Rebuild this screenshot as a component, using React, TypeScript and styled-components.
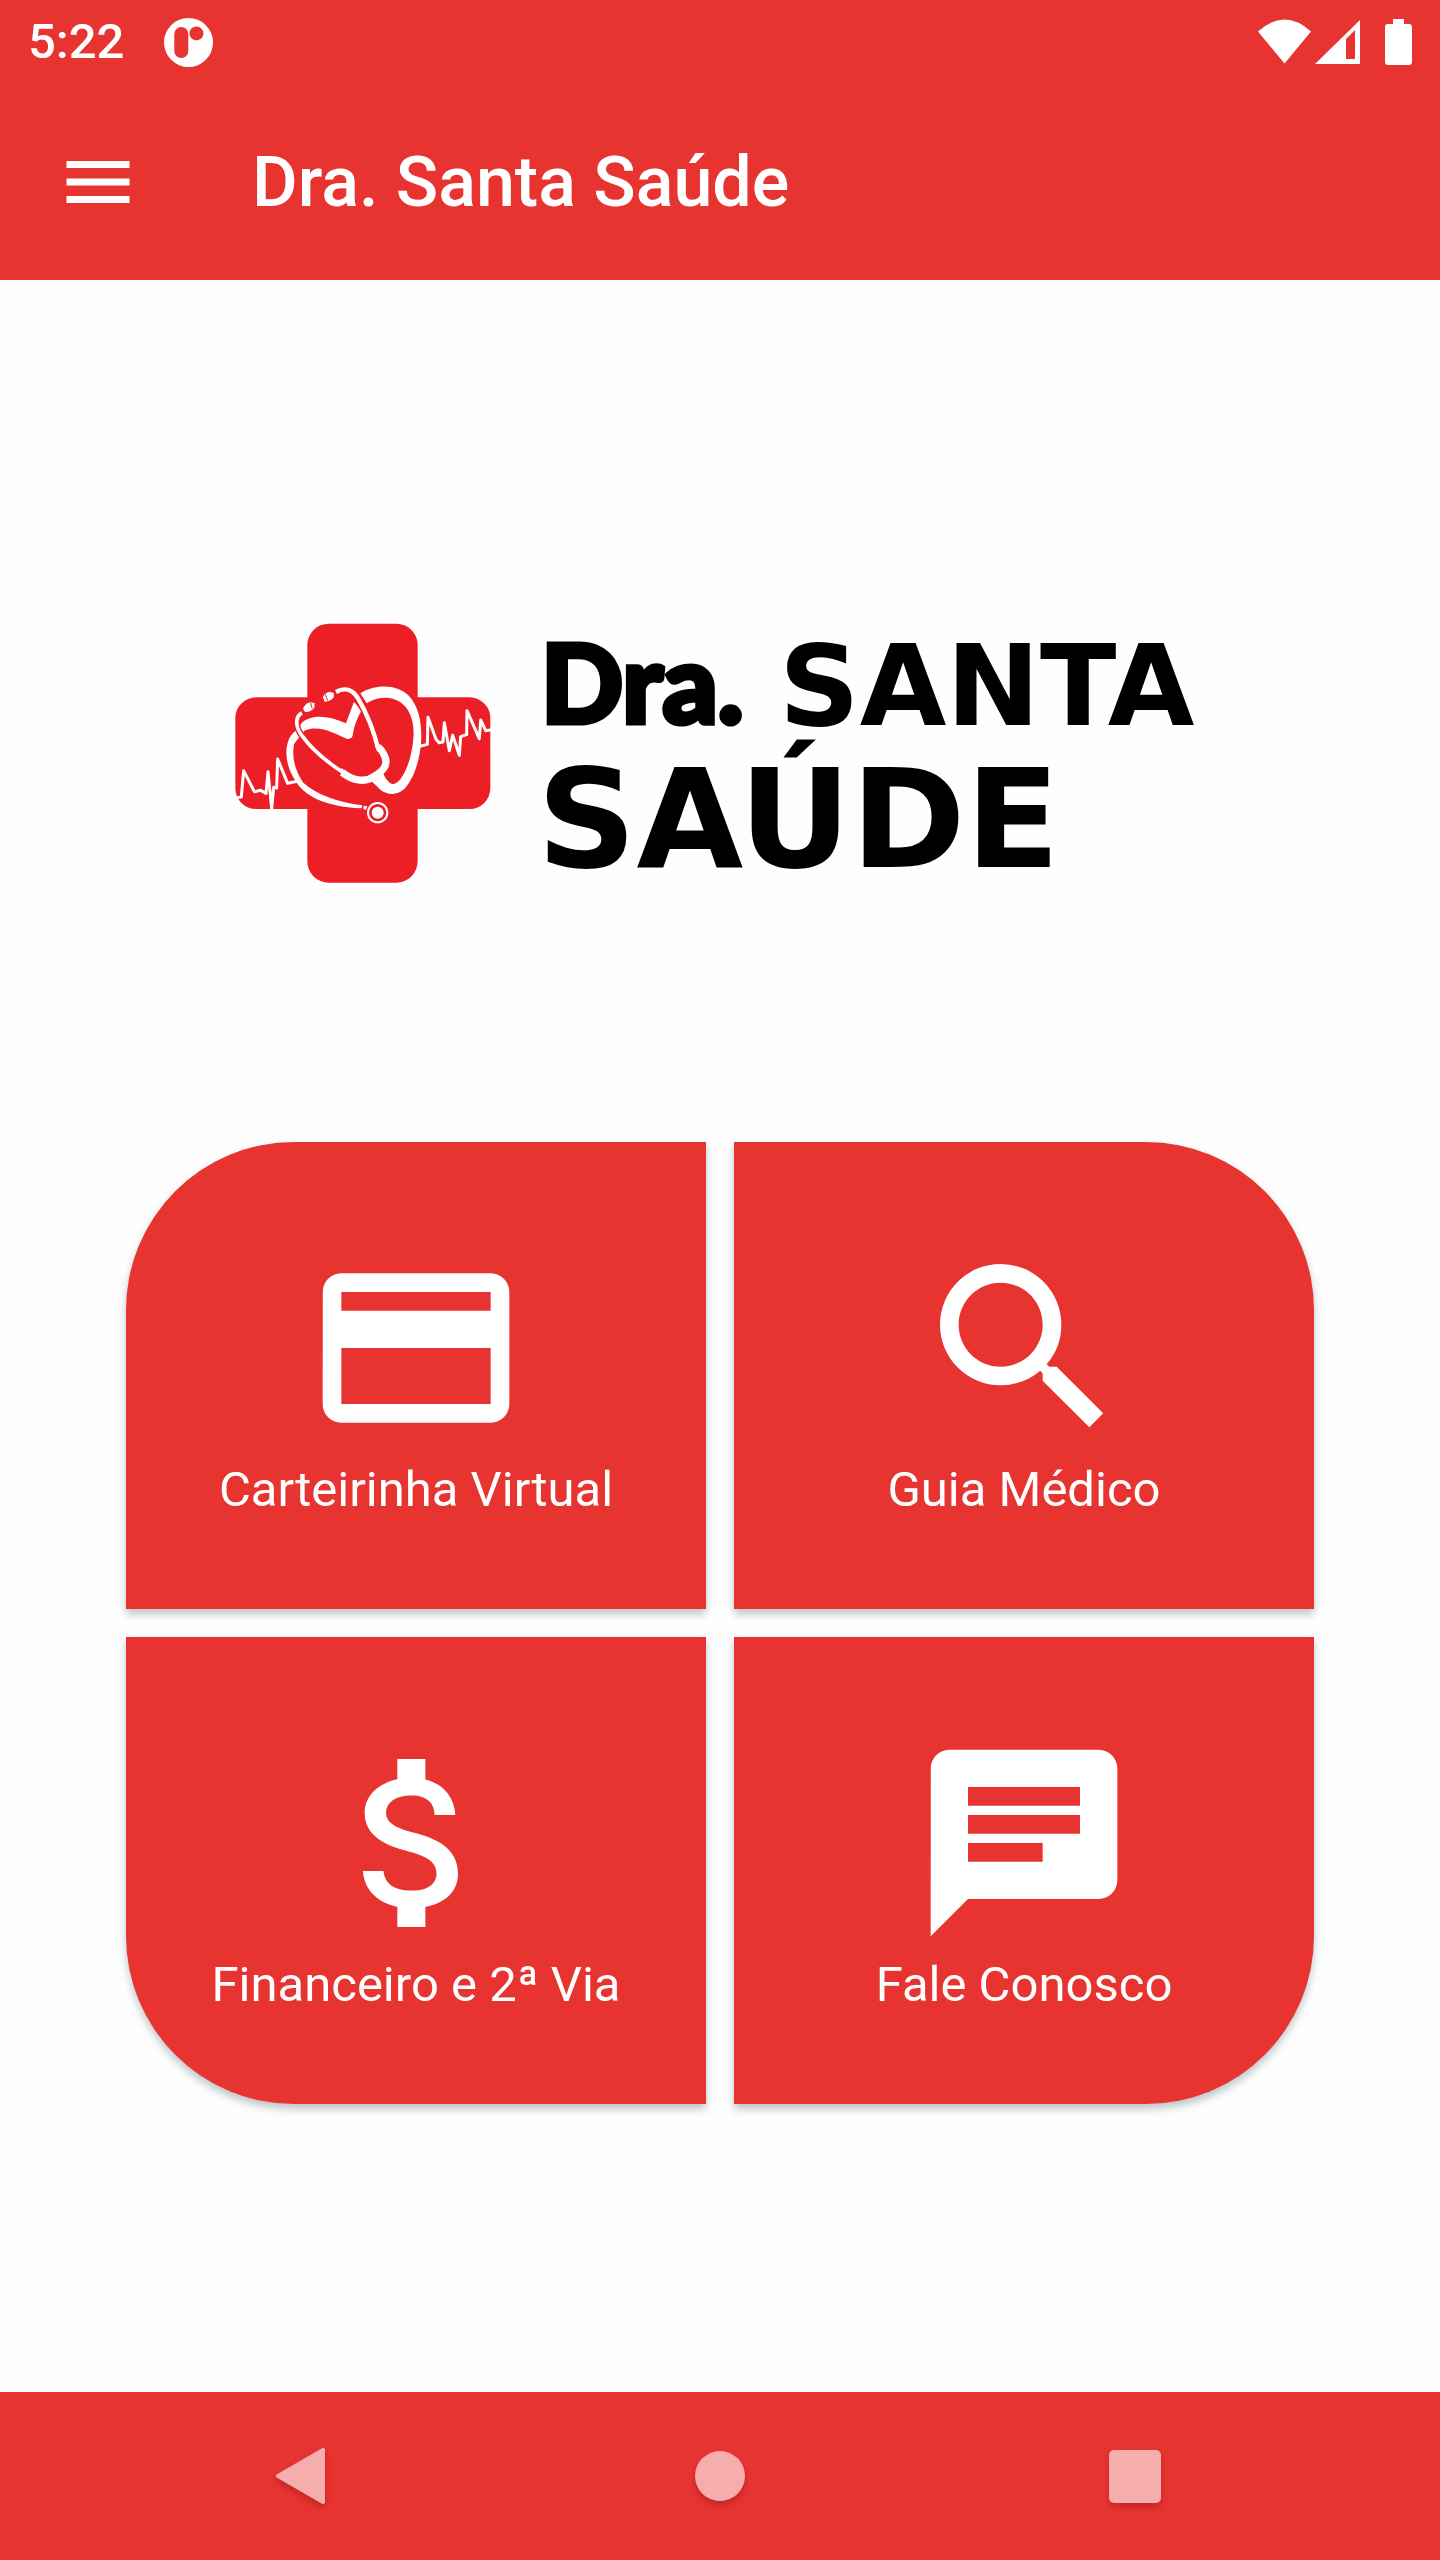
import React from "react";
import styled, { createGlobalStyle } from "styled-components";
import { MdAttachMoney, MdChat, MdMenu, MdPayment, MdSearch } from "react-icons/md";

const RED = "#e73431";
const LOGO_RED = "#ed1f26";

const GlobalStyle = createGlobalStyle`
  *, *::before, *::after { box-sizing: border-box; }
  body { margin: 0; background: #fefefe; font-family: Roboto, sans-serif; }
`;

const Screen = styled.div`
  display: flex;
  flex-direction: column;
  min-height: 100vh;
`;

const StatusBar = styled.div`
  display: flex;
  align-items: center;
  justify-content: space-between;
  height: 84px;
  padding: 0 28px;
  background: ${RED};
  color: #fff;
`;

const StatusGroup = styled.div<{ $gap: number }>`
  display: flex;
  align-items: center;
  gap: ${(p) => p.$gap}px;
`;

const Clock = styled.span`
  font-size: 49px;
  font-weight: 500;
  line-height: 60px;
`;

const AppBar = styled.header`
  display: flex;
  align-items: center;
  gap: 112px;
  height: 196px;
  padding: 0 56px;
  background: ${RED};
  color: #fff;
`;

const MenuButton = styled.button`
  display: flex;
  padding: 0;
  border: 0;
  background: none;
  color: inherit;
`;

const Title = styled.h1`
  margin: 0;
  font-size: 70px;
  font-weight: 500;
  line-height: 84px;
`;

const Main = styled.main`
  display: flex;
  flex: 1;
  flex-direction: column;
  align-items: center;
  gap: 242px;
  padding: 330px 126px 0;
`;

const Logo = styled.svg`
  width: 980px;
  max-width: 100%;
  flex-shrink: 0;
  overflow: visible;
`;

const Wordmark = styled.text<{ $size: number; $family: string; $outline?: number }>`
  font-family: ${(p) => p.$family}, sans-serif;
  font-size: ${(p) => p.$size}px;
  font-weight: 900;
  stroke: #000;
  stroke-width: ${(p) => p.$outline ?? 0}px;
`;

const Tiles = styled.nav`
  display: grid;
  grid-template-columns: 1fr 1fr;
  gap: 28px;
  width: 100%;
`;

const Tile = styled.button<{ $radius: string }>`
  display: flex;
  flex-direction: column;
  align-items: center;
  justify-content: center;
  gap: 2px;
  height: 467px;
  padding: 2px 0 0;
  border: 0;
  border-radius: ${(p) => p.$radius};
  background: ${RED};
  box-shadow: 0 5px 8px rgba(40, 60, 70, 0.3);
  color: #fff;
  font-family: inherit;
  font-size: 49px;
  line-height: 56px;
`;

const NavBar = styled.footer`
  display: flex;
  align-items: center;
  justify-content: center;
  gap: 247px;
  height: 168px;
  background: ${RED};
`;

const NavButton = styled.button`
  display: flex;
  padding: 0;
  border: 0;
  background: none;
  color: #f6adad;
  filter: drop-shadow(0 4px 3px rgba(120, 0, 0, 0.3));
`;

const tiles = [
  { label: "Carteirinha Virtual", Icon: MdPayment, radius: "168px 0 0 0" },
  { label: "Guia Médico", Icon: MdSearch, radius: "0 168px 0 0" },
  { label: "Financeiro e 2ª Via", Icon: MdAttachMoney, radius: "0 0 0 168px" },
  { label: "Fale Conosco", Icon: MdChat, radius: "0 0 168px 0" },
];

const navItems = [
  {
    label: "Voltar",
    shape: <path d="M57 84 L102 58 V110 Z" stroke="currentColor" strokeWidth="4" strokeLinejoin="round" />,
  },
  { label: "Início", shape: <circle cx="84" cy="84" r="25" /> },
  { label: "Recentes", shape: <rect x="58" y="58" width="52" height="53" rx="5" /> },
];

const TUBE_LEFT = "M246 309 C224 320 226 352 246 377 C272 414 320 455 367 486";
const TUBE_RIGHT = "M348 246 C376 230 400 240 416 268 C440 310 463 370 474 414";

function CrossEmblem() {
  return (
    <g transform="translate(-10 0) scale(0.33333)">
      <rect x="262" y="41" width="331" height="777" rx="64" fill={LOGO_RED} />
      <rect x="46" y="262" width="765" height="335" rx="62" fill={LOGO_RED} />
      <g fill="none" stroke="#fff" strokeWidth="9" strokeLinejoin="round" strokeLinecap="round">
        <path d="M48 563 L64 561 L71 482 L103 545 L122 541 L138 550 L144 485 L155 595 L161 532 L170 534 L173 447 L203 520 L235 513" />
        <path d="M602 408 L622 403 L624 322 L648 388 L657 398 L669 396 L673 338 L688 422 L698 376 L718 436 L722 380 L740 374 L741 302 L778 386 L782 330 L797 362 L811 360" />
      </g>
      <g fill="#fff">
        <path d="M421 250 C465 222 530 222 565 256 C598 290 607 345 603 400 C598 460 577 513 552 538 C530 558 500 554 482 540 L455 514 L488 484 C492 500 505 520 518 523 C542 520 560 480 571 440 C585 385 584 340 568 308 C546 262 490 250 440 280 Z" />
        <path d="M243 341 C270 314 318 314 378 340 L402 275 L424 303 C408 330 401 355 398 378 Q392 390 380 386 C345 372 300 343 253 362 L222 402 C214 450 230 490 250 518 C286 552 350 576 427 586 L425 595 C310 590 250 555 225 510 C200 472 192 425 206 390 C212 374 224 364 236 358 Z" />
      </g>
      <g fill="none" strokeLinecap="butt">
        <path d={TUBE_LEFT} stroke={LOGO_RED} strokeWidth="19" />
        <path d={TUBE_RIGHT} stroke={LOGO_RED} strokeWidth="22" />
        <path d={TUBE_LEFT} stroke="#fff" strokeWidth="11" />
        <path d={TUBE_RIGHT} stroke="#fff" strokeWidth="13" />
        <path d="M366 487 C395 510 435 520 461 500 C496 480 505 460 493 436 Q486 420 475 411" stroke="#fff" strokeWidth="22" />
        <path d="M362 478 L372 487 M467 413 L481 407" stroke="#fff" strokeWidth="10" />
      </g>
      <g fill="#fff">
        <path d="M249 296 Q254 282 270 277 L284 279 L283 294 Q270 308 255 306 Z" />
        <path d="M309 262 Q312 250 328 245 L342 249 L341 262 Q330 276 314 275 Z" />
        <path d="M431 587 L442 589 L438 600 L430 597 Z" />
      </g>
      <path d="M271 278 L277 296 M316 253 L323 272" stroke={LOGO_RED} strokeWidth="3" />
      <circle cx="473" cy="608" r="29" fill={LOGO_RED} stroke="#fff" strokeWidth="6" />
      <circle cx="473" cy="608" r="18" fill="#fff" />
    </g>
  );
}

function BrandLogo() {
  return (
    <Logo viewBox="0 0 980 290" role="img" aria-label="Dra. Santa Saúde">
      <CrossEmblem />
      <Wordmark $family="Lato" $size={108} $outline={5} x="311" y="113">Dra.</Wordmark>
      <Wordmark $family="'DejaVu Sans'" $size={112} x="549" y="115">SANTA</Wordmark>
      <Wordmark $family="'DejaVu Sans'" $size={138} x="307" y="257">SAÚDE</Wordmark>
    </Logo>
  );
}

export default function App() {
  return (
    <Screen>
      <GlobalStyle />
      <StatusBar>
        <StatusGroup $gap={40}>
          <Clock>5:22</Clock>
          <svg width="49" height="49" viewBox="0 0 49 49" aria-hidden="true">
            <circle cx="24.5" cy="24.5" r="24.5" fill="#fff" />
            <rect x="10.3" y="9" width="14" height="31" rx="7" fill={RED} />
            <circle cx="32.4" cy="15.4" r="7" fill={RED} />
          </svg>
        </StatusGroup>
        <StatusGroup $gap={4}>
          <svg width="53" height="46" viewBox="0 0 53 46" fill="#fff" aria-hidden="true">
            <path d="M0 12.5 Q26.5 -11.5 53 12.5 L26.5 44.5 Z" />
          </svg>
          <svg width="45" height="46" viewBox="0 0 45 46" fill="#fff" fillRule="evenodd" aria-hidden="true">
            <path d="M45 1 V45 H0 Z M31 20 V40 H40 V11 Z" />
          </svg>
          <svg width="48" height="46" viewBox="0 0 48 46" fill="#fff" aria-hidden="true">
            <rect x="29" y="0" width="11" height="8" />
            <rect x="21" y="5" width="27" height="41" rx="3" />
          </svg>
        </StatusGroup>
      </StatusBar>
      <AppBar>
        <MenuButton aria-label="Menu">
          <MdMenu size={84} />
        </MenuButton>
        <Title>Dra. Santa Saúde</Title>
      </AppBar>
      <Main>
        <BrandLogo />
        <Tiles>
          {tiles.map(({ label, Icon, radius }) => (
            <Tile key={label} $radius={radius}>
              <Icon size={224} />
              {label}
            </Tile>
          ))}
        </Tiles>
      </Main>
      <NavBar>
        {navItems.map(({ label, shape }) => (
          <NavButton key={label} aria-label={label}>
            <svg width="168" height="168" viewBox="0 0 168 168" fill="currentColor">
              {shape}
            </svg>
          </NavButton>
        ))}
      </NavBar>
    </Screen>
  );
}
